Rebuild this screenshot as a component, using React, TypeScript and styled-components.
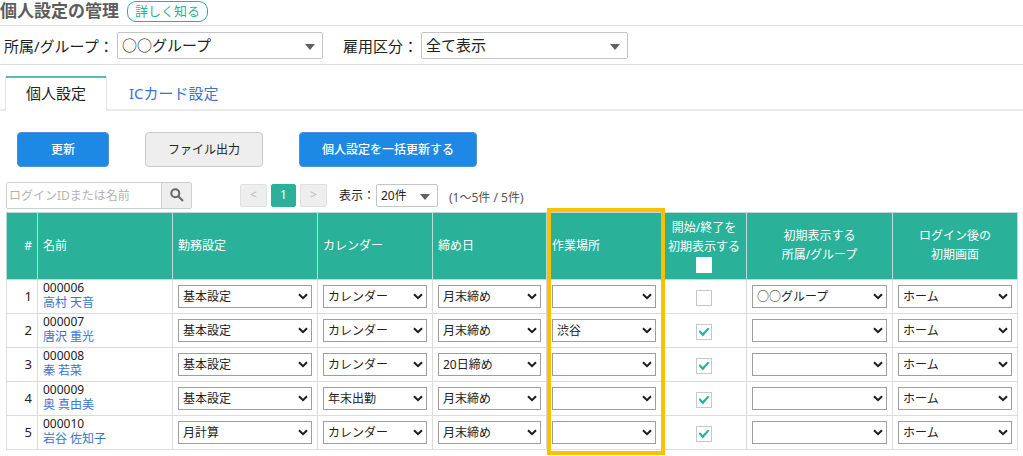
import React, { useState } from "react";
import styled, { createGlobalStyle, css } from "styled-components";

const teal = "#29b299";
const blue = "#1e88e5";
const link = "#3a74cc";
const line = "#dcdcdc";

const GlobalStyle = createGlobalStyle`
  *, *::before, *::after { box-sizing: border-box; }
  body { margin: 0; background: #fff; text-spacing-trim: space-all; }
  body, button, input, select {
    font-family: "Noto Sans", "Noto Sans CJK JP", sans-serif;
    color: #222;
  }
  a { color: ${link}; text-decoration: none; }
`;

const TitleBar = styled.header`
  display: flex;
  align-items: center;
  gap: 8px;
  height: 26px;
  padding-bottom: 3px;
  border-bottom: 1px solid ${line};
`;

const Title = styled.h1`
  margin: 0;
  font-size: 17px;
  line-height: 22px;
  font-weight: 700;
  color: #5c5c5c;
`;

const MoreLink = styled.a`
  height: 21px;
  padding: 0 7px;
  border: 1px solid ${teal};
  border-radius: 9px;
  font-size: 13px;
  line-height: 18px;
  && { color: ${teal}; }
`;

const FilterBar = styled.div`
  display: flex;
  align-items: center;
  gap: 20px;
  height: 39px;
  padding: 0 4px;
  border-bottom: 1px solid ${line};
`;

const Field = styled.div`
  display: flex;
  align-items: center;
`;

const FieldLabel = styled.label<{ $width: number; $small?: boolean }>`
  width: ${(p) => p.$width}px;
  font-size: ${(p) => (p.$small ? 12 : 15)}px;
  white-space: nowrap;
`;

const SelectBox = styled.span<{ $width?: number }>`
  display: grid;
  align-items: center;
  width: ${(p) => (p.$width ? `${p.$width}px` : "100%")};
  > * { grid-area: 1 / 1; }
  > svg {
    justify-self: end;
    pointer-events: none;
  }
`;

const BaseSelect = styled.select`
  appearance: none;
  width: 100%;
  margin: 0;
  background: #fff;
  outline: none;
`;

const FilterSelect = styled(BaseSelect)<{ $small?: boolean }>`
  height: ${(p) => (p.$small ? 23 : 27)}px;
  padding: 0 4px;
  border: 1px solid #c4c4c4;
  border-radius: 2px;
  font-size: ${(p) => (p.$small ? 12 : 15)}px;
`;

const CellSelect = styled(BaseSelect)`
  height: 23px;
  padding: 0 4px 1px;
  border: 1px solid #9e9e9e;
  border-radius: 0;
  font-size: 12px;
`;

const TriangleIcon = styled.svg`
  width: 10px;
  height: 6px;
  margin: 3px 8px 0 0;
  fill: #606060;
`;

const ChevronIcon = styled.svg`
  width: 10px;
  height: 7px;
  margin-right: 4px;
  fill: none;
  stroke: #1c1c1c;
  stroke-width: 2;
`;

const Tabs = styled.nav`
  display: flex;
  height: 46px;
  padding: 11px 5px 0;
  box-shadow: inset 0 -2px 0 #e9e9e9;
`;

const Tab = styled.a<{ $active?: boolean }>`
  padding: 0 22px;
  font-size: 15px;
  line-height: 34px;
  ${(p) =>
    p.$active &&
    css`
      padding: 0 20px;
      background: #fff;
      border: solid #e4e4e4;
      border-width: 0 1px;
      box-shadow: inset 0 2px 0 #55c0a8;
      && { color: #222; }
    `}
`;

const Actions = styled.div`
  display: flex;
  gap: 36px;
  padding: 21px 17px 0;
`;

const ActionButton = styled.button<{ $primary?: boolean }>`
  height: 35px;
  padding: 0 22px 2px;
  border: 1px solid ${(p) => (p.$primary ? "#4b93d6" : "#c8c8c8")};
  border-radius: 4px;
  background: ${(p) => (p.$primary ? blue : "#eee")};
  color: ${(p) => (p.$primary ? "#fff" : "#222")};
  font-size: 12px;
  font-weight: ${(p) => (p.$primary ? 500 : 400)};
  min-width: 92px;
`;

const Tools = styled.div`
  display: flex;
  align-items: center;
  height: 41px;
  margin-top: 4px;
  padding: 7px 6px 0;
`;

const SearchForm = styled.form`
  display: flex;
  width: 186px;
  height: 27px;
  margin-right: 48px;
  border: 1px solid #cfcfcf;
  border-radius: 2px;
`;

const SearchInput = styled.input`
  flex: 1;
  min-width: 0;
  padding: 0 2px;
  border: 0;
  outline: none;
  font-size: 12px;
  &::placeholder { color: #b4b4b4; opacity: 1; }
`;

const SearchButton = styled.button`
  display: grid;
  place-items: center;
  width: 30px;
  padding: 0;
  border: 0;
  border-left: 1px solid #cfcfcf;
  background: #eee;
`;

const Pager = styled.div`
  display: flex;
  gap: 4px;
  margin-right: 12px;
`;

const PageButton = styled.button<{ $current?: boolean }>`
  width: ${(p) => (p.$current ? 25 : 27)}px;
  height: 23px;
  padding: 0;
  border: 1px solid ${(p) => (p.$current ? teal : "#e0e0e0")};
  border-radius: 2px;
  background: ${(p) => (p.$current ? teal : "#eee")};
  color: ${(p) => (p.$current ? "#fff" : "#bdbdbd")};
  font-size: 12px;
  line-height: 20px;
`;

const Count = styled.span`
  margin: 3px 0 0 11px;
  font-size: 12px;
  color: #555;
`;

const TableArea = styled.main`
  padding: 0 5px 7px 6px;
`;

const Table = styled.table`
  width: 100%;
  table-layout: fixed;
  border-collapse: collapse;
  font-size: 12px;
`;

const Column = styled.col<{ $share: number }>`
  width: ${(p) => p.$share}px;
`;

const frame = css<{ $framed?: boolean; $edge?: "top" | "bottom" }>`
  ${(p) =>
    p.$framed &&
    css`
      position: relative;
      &::after {
        content: "";
        position: absolute;
        z-index: 1;
        top: ${p.$edge === "top" ? -5 : -1}px;
        bottom: ${p.$edge === "bottom" ? -6 : -1}px;
        left: 0;
        right: -4px;
        border: solid #ffc000;
        border-width: ${p.$edge === "top" ? 4 : 0}px 4px ${p.$edge === "bottom" ? 4 : 0}px;
        pointer-events: none;
      }
    `}
`;

const HeadCell = styled.th<{
  $align?: "left" | "center" | "right";
  $framed?: boolean;
  $edge?: "top" | "bottom";
}>`
  height: 67px;
  padding: 0 5px 2px;
  border: 1px solid #b9dcd4;
  background: ${teal};
  color: #fff;
  font-weight: 400;
  line-height: 19px;
  white-space: nowrap;
  text-align: ${(p) => p.$align ?? "left"};
  ${frame}
`;

const Cell = styled.td<{
  $align?: "left" | "center" | "right";
  $framed?: boolean;
  $edge?: "top" | "bottom";
}>`
  height: 34px;
  padding: 0 5px;
  border: 1px solid ${line};
  line-height: 15px;
  text-align: ${(p) => p.$align ?? "left"};
  ${frame}
`;

const RowNumber = styled.span`
  font-size: 13px;
`;

const Person = styled.div`
  display: grid;
  padding-bottom: 3px;
`;

const CheckBox = styled.input`
  appearance: none;
  display: inline-grid;
  place-items: center;
  width: 16px;
  height: 16px;
  margin: 3px 0 0;
  border: 1px solid #c9c9c9;
  background: #fff;
  vertical-align: middle;
  &:checked::before {
    content: "";
    width: 11px;
    height: 9px;
    background: ${teal};
    clip-path: polygon(0 45%, 14% 30%, 38% 62%, 88% 0, 100% 14%, 39% 100%);
  }
`;

const HeadCheck = styled(CheckBox)`
  display: grid;
  margin: 1px auto 0;
  border-color: #fff;
`;

const Chevron = () => (
  <ChevronIcon viewBox="0 0 10 7" aria-hidden="true">
    <path d="M1 1.2 5 5.2 9 1.2" />
  </ChevronIcon>
);

const Triangle = () => (
  <TriangleIcon viewBox="0 0 10 6" aria-hidden="true">
    <path d="M0 0H10L5 6Z" />
  </TriangleIcon>
);

const RowSelect = ({ label, value, options }: { label: string; value: string; options: string[] }) => (
  <SelectBox>
    <CellSelect aria-label={label} defaultValue={value}>
      {options.map((o) => (
        <option key={o} value={o}>{o}</option>
      ))}
    </CellSelect>
    <Chevron />
  </SelectBox>
);

const shares = [31, 135, 145, 115, 114, 115, 85, 146, 125];

const people = [
  { id: "000006", name: "高村 天音", work: "基本設定", calendar: "カレンダー", close: "月末締め", place: "", show: false, group: "○○グループ" },
  { id: "000007", name: "唐沢 重光", work: "基本設定", calendar: "カレンダー", close: "月末締め", place: "渋谷", show: true, group: "" },
  { id: "000008", name: "秦 若菜", work: "基本設定", calendar: "カレンダー", close: "20日締め", place: "", show: true, group: "" },
  { id: "000009", name: "奥 真由美", work: "基本設定", calendar: "年末出勤", close: "月末締め", place: "", show: true, group: "" },
  { id: "000010", name: "岩谷 佐知子", work: "月計算", calendar: "カレンダー", close: "月末締め", place: "", show: true, group: "" },
];

export default function App() {
  const [shown, setShown] = useState(people.map((p) => p.show));
  const last = people.length - 1;

  return (
    <>
      <GlobalStyle />
      <TitleBar>
        <Title>個人設定の管理</Title>
        <MoreLink href="#help">詳しく知る</MoreLink>
      </TitleBar>

      <FilterBar>
        <Field>
          <FieldLabel $width={113} htmlFor="group">所属/グループ：</FieldLabel>
          <SelectBox $width={206}>
            <FilterSelect id="group"><option>○○グループ</option></FilterSelect>
            <Triangle />
          </SelectBox>
        </Field>
        <Field>
          <FieldLabel $width={78} htmlFor="employment">雇用区分：</FieldLabel>
          <SelectBox $width={207}>
            <FilterSelect id="employment"><option>全て表示</option></FilterSelect>
            <Triangle />
          </SelectBox>
        </Field>
      </FilterBar>

      <Tabs>
        <Tab $active href="#personal">個人設定</Tab>
        <Tab href="#ic">ICカード設定</Tab>
      </Tabs>

      <Actions>
        <ActionButton $primary>更新</ActionButton>
        <ActionButton>ファイル出力</ActionButton>
        <ActionButton $primary>個人設定を一括更新する</ActionButton>
      </Actions>

      <Tools>
        <SearchForm onSubmit={(e) => e.preventDefault()}>
          <SearchInput aria-label="検索" placeholder="ログインIDまたは名前" />
          <SearchButton aria-label="検索する">
            <svg width="14" height="14" viewBox="0 0 14 14" fill="none" stroke="#666" strokeWidth="2">
              <circle cx="5.3" cy="5.3" r="4" />
              <path d="M8.3 8.3 13 13" />
            </svg>
          </SearchButton>
        </SearchForm>
        <Pager>
          <PageButton>&lt;</PageButton>
          <PageButton $current>1</PageButton>
          <PageButton>&gt;</PageButton>
        </Pager>
        <Field>
          <FieldLabel $width={37} $small htmlFor="size">表示：</FieldLabel>
          <SelectBox $width={62}>
            <FilterSelect id="size" $small><option>20件</option></FilterSelect>
            <Triangle />
          </SelectBox>
        </Field>
        <Count>(1～5件 / 5件)</Count>
      </Tools>

      <TableArea>
        <Table>
          <colgroup>
            {shares.map((s, i) => <Column key={i} $share={s} />)}
          </colgroup>
          <thead>
            <tr>
              <HeadCell $align="right">#</HeadCell>
              <HeadCell>名前</HeadCell>
              <HeadCell>勤務設定</HeadCell>
              <HeadCell>カレンダー</HeadCell>
              <HeadCell>締め日</HeadCell>
              <HeadCell $framed $edge="top">作業場所</HeadCell>
              <HeadCell $align="center">
                開始/終了を<br />初期表示する
                <HeadCheck
                  type="checkbox"
                  aria-label="すべて初期表示する"
                  checked={shown.every(Boolean)}
                  onChange={(e) => setShown(shown.map(() => e.target.checked))}
                />
              </HeadCell>
              <HeadCell $align="center">初期表示する<br />所属/グループ</HeadCell>
              <HeadCell $align="center">ログイン後の<br />初期画面</HeadCell>
            </tr>
          </thead>
          <tbody>
            {people.map((p, i) => (
              <tr key={p.id}>
                <Cell $align="right"><RowNumber>{i + 1}</RowNumber></Cell>
                <Cell>
                  <Person>
                    <span>{p.id}</span>
                    <a href={`#${p.id}`}>{p.name}</a>
                  </Person>
                </Cell>
                <Cell><RowSelect label="勤務設定" value={p.work} options={["基本設定", "月計算"]} /></Cell>
                <Cell><RowSelect label="カレンダー" value={p.calendar} options={["カレンダー", "年末出勤"]} /></Cell>
                <Cell><RowSelect label="締め日" value={p.close} options={["月末締め", "20日締め"]} /></Cell>
                <Cell $framed $edge={i === last ? "bottom" : undefined}>
                  <RowSelect label="作業場所" value={p.place} options={["", "渋谷"]} />
                </Cell>
                <Cell $align="center">
                  <CheckBox
                    type="checkbox"
                    aria-label={`${p.name} 初期表示する`}
                    checked={shown[i]}
                    onChange={(e) => setShown(shown.map((s, n) => (n === i ? e.target.checked : s)))}
                  />
                </Cell>
                <Cell><RowSelect label="所属/グループ" value={p.group} options={["", "○○グループ"]} /></Cell>
                <Cell><RowSelect label="初期画面" value="ホーム" options={["ホーム"]} /></Cell>
              </tr>
            ))}
          </tbody>
        </Table>
      </TableArea>
    </>
  );
}
